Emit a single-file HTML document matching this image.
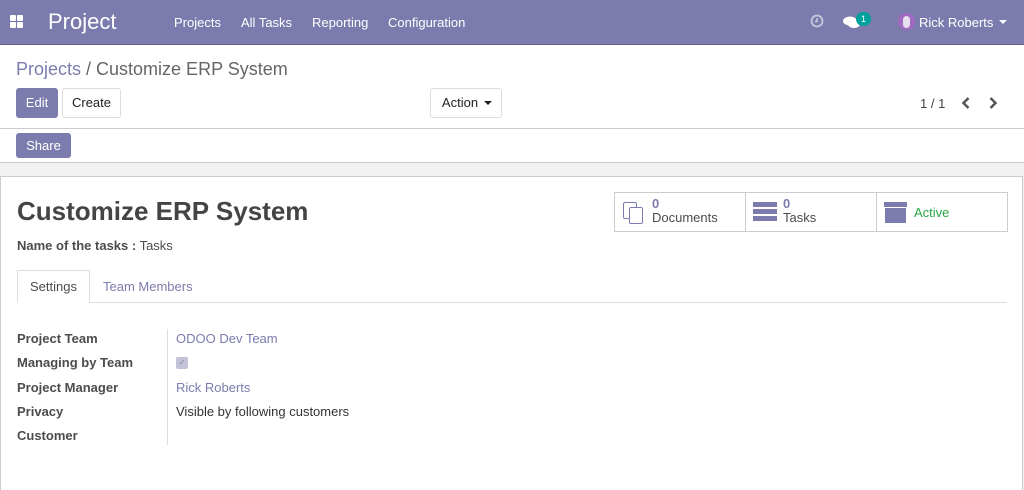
<!DOCTYPE html>
<html><head><style>
*{box-sizing:border-box;margin:0;padding:0}
body{width:1024px;height:490px;overflow:hidden;font-family:"Liberation Sans",sans-serif;font-size:13px;color:#4c4c4c;background:#fff;position:relative}
.a{position:absolute}
.nav{left:0;top:0;width:1024px;height:45px;background:#7c7bad;border-bottom:1px solid #5f5e8f;color:#fff}
.nav span{position:absolute;font-size:13px;top:15px}
.btn{position:absolute;border-radius:3px;font-size:13px;text-align:center;line-height:28px}
.pri{background:#7c7bad;color:#fff}
.sec{background:#fff;border:1px solid #ddd;color:#222}
.lbl{position:absolute;left:17px;font-weight:bold;color:#4c4c4c}
.val{position:absolute;left:176px}
</style></head><body>
<div class="a nav">
 <div class="a" style="left:10px;top:15px;width:6px;height:6px;background:#fff;border-radius:1px"></div>
 <div class="a" style="left:17px;top:15px;width:6px;height:6px;background:#fff;border-radius:1px"></div>
 <div class="a" style="left:10px;top:22px;width:6px;height:6px;background:#fff;border-radius:1px"></div>
 <div class="a" style="left:17px;top:22px;width:6px;height:6px;background:#fff;border-radius:1px"></div>
 <span style="left:48px;top:9px;font-size:22px">Project</span>
 <span style="left:174px">Projects</span>
 <span style="left:241px">All Tasks</span>
 <span style="left:312px">Reporting</span>
 <span style="left:388px">Configuration</span>
 <svg class="a" style="left:810px;top:14px" width="14" height="14" viewBox="0 0 14 14"><circle cx="7" cy="7" r="5.5" fill="none" stroke="#c8c8dc" stroke-width="1.8"/><path d="M7 4V7.5H5" fill="none" stroke="#c8c8dc" stroke-width="1.5"/></svg>
 <svg class="a" style="left:843px;top:14px" width="18" height="16" viewBox="0 0 18 16"><ellipse cx="7" cy="7" rx="7" ry="4.5" fill="#fff"/><ellipse cx="11" cy="10" rx="6" ry="4" fill="#fff"/></svg>
 <div class="a" style="left:856px;top:12px;width:15px;height:14px;background:#00a09d;border-radius:7px;font-size:9px;text-align:center;line-height:14px">1</div>
 <div class="a" style="left:898px;top:13px;width:17px;height:17px;background:#a26bc2;border-radius:50%"><div class="a" style="left:5px;top:3px;width:7px;height:12px;background:#e8e0f0;border-radius:4px"></div></div>
 <span style="left:919px">Rick Roberts</span>
 <div class="a" style="left:999px;top:20px;border:4px solid transparent;border-top-color:#fff"></div>
</div>
<div class="a" style="left:16px;top:59px;font-size:18px;color:#666"><span style="color:#7c7bad">Projects</span> / Customize ERP System</div>
<div class="btn pri" style="left:16px;top:88px;width:42px;height:30px;line-height:30px">Edit</div>
<div class="btn sec" style="left:62px;top:88px;width:59px;height:30px">Create</div>
<div class="btn sec" style="left:430px;top:88px;width:72px;height:30px;padding-right:12px">Action<div class="a" style="left:53px;top:12px;border:4px solid transparent;border-top-color:#222"></div></div>
<div class="a" style="left:920px;top:96px;color:#444">1 / 1</div>
<svg class="a" style="left:960px;top:96px" width="12" height="14" viewBox="0 0 12 14"><path d="M8.5 2L3.5 7L8.5 12" fill="none" stroke="#555" stroke-width="2.5"/></svg>
<svg class="a" style="left:987px;top:96px" width="12" height="14" viewBox="0 0 12 14"><path d="M3.5 2L8.5 7L3.5 12" fill="none" stroke="#555" stroke-width="2.5"/></svg>
<div class="a" style="left:0;top:128px;width:1024px;height:1px;background:#ccc"></div>
<div class="btn pri" style="left:16px;top:133px;width:55px;height:25px;line-height:25px">Share</div>
<div class="a" style="left:0;top:162px;width:1024px;height:328px;background:#f2f2f2;border-top:1px solid #ccc"></div>
<div class="a" style="left:0;top:176px;width:1023px;height:314px;background:#fff;border:1px solid #ccc;border-bottom:none"></div>
<div class="a" style="left:17px;top:196px;font-size:26px;font-weight:bold;color:#444">Customize ERP System</div>
<div class="a" style="left:17px;top:238px"><b>Name of the tasks :</b> Tasks</div>
<div class="a" style="left:614px;top:192px;width:394px;height:40px;border:1px solid #ccc;display:flex">
 <div style="width:131px;border-right:1px solid #ccc;position:relative">
  <div class="a" style="left:8px;top:9px;width:14px;height:17px;border:1.5px solid #7c7bad;border-radius:2px;background:#fff"></div>
  <div class="a" style="left:14px;top:14px;width:14px;height:17px;border:1.5px solid #7c7bad;border-radius:2px;background:#fff"></div>
  <div class="a" style="left:37px;top:4px;line-height:14px"><b style="color:#7c7bad">0</b><br>Documents</div></div>
 <div style="width:131px;border-right:1px solid #ccc;position:relative">
  <div class="a" style="left:7px;top:9px;width:24px;height:5px;background:#7c7bad"></div>
  <div class="a" style="left:7px;top:16px;width:24px;height:5px;background:#7c7bad"></div>
  <div class="a" style="left:7px;top:23px;width:24px;height:5px;background:#7c7bad"></div>
  <div class="a" style="left:37px;top:4px;line-height:14px"><b style="color:#7c7bad">0</b><br>Tasks</div></div>
 <div style="flex:1;position:relative">
  <div class="a" style="left:7px;top:9px;width:23px;height:5px;background:#7c7bad"></div>
  <div class="a" style="left:8px;top:15px;width:21px;height:15px;background:#7c7bad"></div>
  <div class="a" style="left:37px;top:12px;color:#28a745">Active</div></div>
</div>
<div class="a" style="left:17px;top:302px;width:990px;height:1px;background:#ddd"></div>
<div class="a" style="left:17px;top:270px;width:73px;height:33px;border:1px solid #ddd;border-bottom:none;background:#fff;text-align:center;line-height:32px">Settings</div>
<div class="a" style="left:103px;top:279px;color:#7c7bad">Team Members</div>
<div class="a" style="left:167px;top:329px;width:1px;height:116px;background:#ddd"></div>
<div class="lbl" style="top:331px">Project Team</div>
<div class="lbl" style="top:355px">Managing by Team</div>
<div class="lbl" style="top:380px">Project Manager</div>
<div class="lbl" style="top:404px">Privacy</div>
<div class="lbl" style="top:428px">Customer</div>
<div class="val" style="top:331px;color:#7c7bad">ODOO Dev Team</div>
<div class="a" style="left:176px;top:357px;width:12px;height:12px;background:#c3c2d9;border-radius:2px;font-size:8px;color:#7c7bad;text-align:center;line-height:12px">✓</div>
<div class="val" style="top:380px;color:#7c7bad">Rick Roberts</div>
<div class="val" style="top:404px;color:#333">Visible by following customers</div>
</body></html>
